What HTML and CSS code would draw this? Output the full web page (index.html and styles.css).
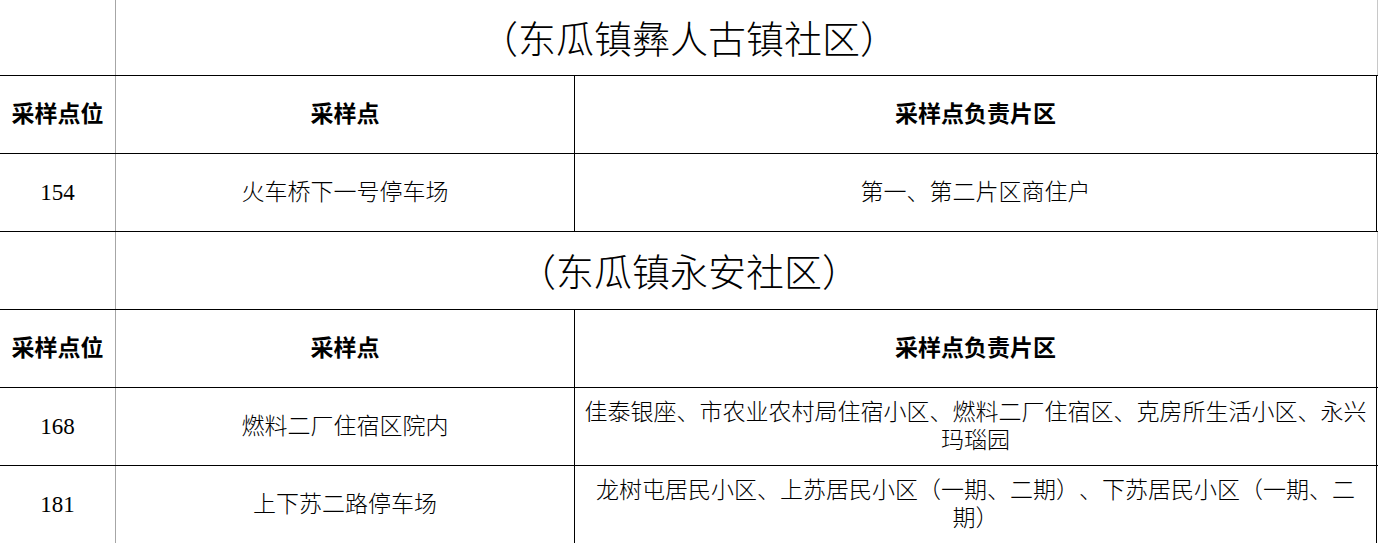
FILE: index.html
```html
<!DOCTYPE html>
<html lang="zh-CN">
<head>
<meta charset="utf-8">
<title>采样点</title>
<link rel="stylesheet" href="styles.css">
</head>
<body>
<div class="sheet">
  <div class="row title first">
    <div class="cell c1"></div>
    <div class="cell ttl">（东瓜镇彝人古镇社区）</div>
  </div>
  <div class="row">
    <div class="cell c1 hd">采样点位</div>
    <div class="cell c2 hd">采样点</div>
    <div class="cell c3 hd">采样点负责片区</div>
  </div>
  <div class="row">
    <div class="cell c1">154</div>
    <div class="cell c2">火车桥下一号停车场</div>
    <div class="cell c3">第一、第二片区商住户</div>
  </div>
  <div class="row title">
    <div class="cell c1"></div>
    <div class="cell ttl">（东瓜镇永安社区）</div>
  </div>
  <div class="row">
    <div class="cell c1 hd">采样点位</div>
    <div class="cell c2 hd">采样点</div>
    <div class="cell c3 hd">采样点负责片区</div>
  </div>
  <div class="row">
    <div class="cell c1">168</div>
    <div class="cell c2">燃料二厂住宿区院内</div>
    <div class="cell c3">佳泰银座、市农业农村局住宿小区、燃料二厂住宿区、克房所生活小区、永兴玛瑙园</div>
  </div>
  <div class="row last">
    <div class="cell c1">181</div>
    <div class="cell c2">上下苏二路停车场</div>
    <div class="cell c3">龙树屯居民小区、上苏居民小区（一期、二期）、下苏居民小区（一期、二期）</div>
  </div>
</div>
</body>
</html>
```

FILE: styles.css
```css
html, body {
  margin: 0;
  padding: 0;
  background: #ffffff;
}

.sheet {
  width: 1378px;
  font-family: "Liberation Serif", "Noto Sans CJK SC", serif;
  color: #000000;
  font-size: 23px;
  font-weight: 300;
  text-spacing-trim: space-all;
}

.row {
  display: grid;
  grid-template-columns: 116px 459px 802px;
  height: 78px;
  box-sizing: border-box;
  border-bottom: 1px solid #000000;
}

.row.first {
  height: 76px;
}

.row.last {
  border-bottom: none;
}

.row.title {
  grid-template-columns: 116px 1fr;
}

.cell {
  display: flex;
  align-items: center;
  justify-content: center;
  text-align: center;
  box-sizing: border-box;
  line-height: 28px;
  padding: 0 8px;
}

.c1 {
  border-right: 1px solid #a6a6a6;
  padding: 0;
}

.c2 {
  border-right: 1px solid #000000;
}

.c3 {
  border-right: 1px solid #000000;
}

.hd {
  font-weight: 700;
}

.ttl {
  font-size: 38px;
  line-height: 42px;
  padding: 4px 115px 0 0;
  border-right: 1px solid #c8c8c8;
}
```
